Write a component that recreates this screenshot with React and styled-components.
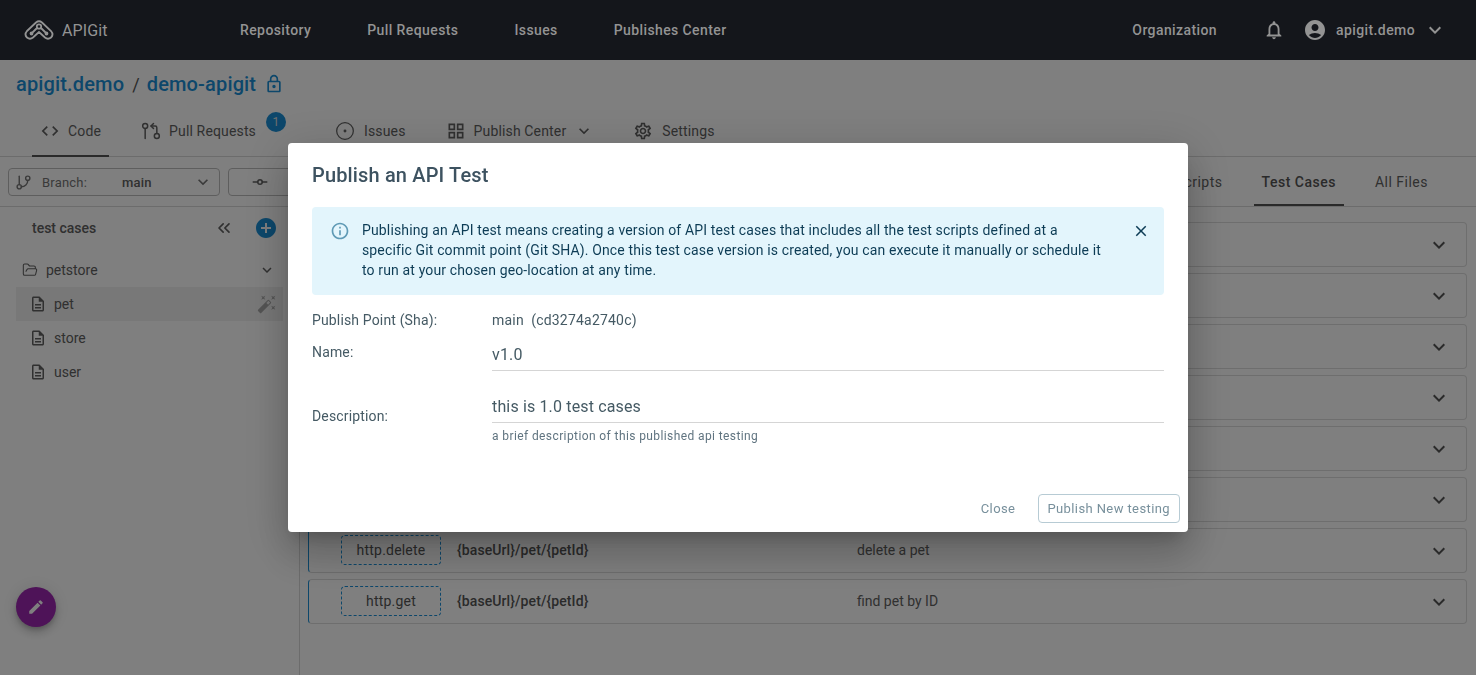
import React from 'react';
import styled, { createGlobalStyle } from 'styled-components';
import {
  MdAccountCircle, MdAddCircle, MdAutoFixHigh, MdClose, MdCode, MdEdit, MdExpandMore,
  MdInfoOutline, MdOutlineDescription, MdOutlineGridView,
  MdOutlineLock, MdOutlineNotifications, MdOutlineSettings,
} from 'react-icons/md';
import { ChevronsLeft, CircleDot, FolderOpen, GitBranch, GitCommitHorizontal, GitPullRequestArrow } from 'lucide-react';

const Global = createGlobalStyle`
  html, body { margin: 0; height: 100%; background: #fff; overflow: hidden; }
  body { font-family: Roboto, "Liberation Sans", sans-serif; color: #37474f; }
  * { box-sizing: border-box; }
`;

const Page = styled.div`
  height: 675px;
  display: flex;
  flex-direction: column;
`;

const Header = styled.header`
  height: 60px;
  flex: none;
  display: flex;
  align-items: center;
  background: #14161b;
  color: #939393;
  padding-left: 24px;
  position: relative;
  z-index: 20;
`;
const Brand = styled.div`
  width: 216px;
  display: flex;
  align-items: center;
  gap: 8px;
  font-size: 16px;
  letter-spacing: 0.1px;
`;
const NavLink = styled.span`
  font-size: 14px;
  font-weight: 500;
  letter-spacing: 0.4px;
  margin-right: ${p => p.$gap || 56}px;
`;
const HeaderRight = styled.div`
  margin-left: auto;
  display: flex;
  align-items: center;
  padding-right: 29px;
`;
const UserName = styled.span`
  font-size: 14px;
  font-weight: 500;
  letter-spacing: 0.4px;
  margin: 0 8px 0 9px;
`;

const Crumbs = styled.div`
  height: 48px;
  margin-bottom: 2px;
  flex: none;
  padding-left: 16px;
  display: flex;
  align-items: center;
  gap: 8px;
  font-size: 20px;
  font-weight: 500;
  letter-spacing: 0.15px;
  color: #1a8fd6;
`;
const Slash = styled.span`
  color: #555;
  font-weight: 400;
  font-size: 18px;
  margin-right: -1px;
`;

const TabBar = styled.div`
  height: 47px;
  flex: none;
  display: flex;
  padding-left: 32px;
  border-bottom: 1px solid #d9d9d9;
`;
const Tab = styled.div`
  display: flex;
  align-items: center;
  gap: ${p => p.$gap || 8}px;
  height: 47px;
  padding: 0 8px 4px;
  margin-right: ${p => p.$mr || 0}px;
  font-size: 14px;
  letter-spacing: 0.15px;
  color: #616161;
  position: relative;
  border-bottom: 2px solid ${p => (p.$active ? '#555' : 'transparent')};
`;
const Badge = styled.span`
  position: absolute;
  top: 2px;
  right: -22px;
  width: 20px;
  height: 20px;
  border-radius: 50%;
  background: #1a8fd6;
  color: #ddd;
  font-size: 12px;
  display: flex;
  align-items: center;
  justify-content: center;
`;

const Toolbar = styled.div`
  height: 50px;
  flex: none;
  display: flex;
  align-items: center;
  padding: 1px 0 0 8px;
  gap: 8px;
  border-bottom: 1px solid #d9d9d9;
`;
const BranchSelect = styled.div`
  width: 212px;
  height: 28px;
  display: flex;
  align-items: center;
  padding: 0 6px;
  border: 1px solid #bdbdbd;
  border-radius: 4px;
  font-size: 13px;
  letter-spacing: 0.2px;
  color: #757575;
`;
const BranchName = styled.b`
  margin: 0 auto 0 35px;
  font-weight: 500;
  color: #616161;
`;
const CommitButton = styled.div`
  width: 120px;
  height: 28px;
  display: flex;
  align-items: center;
  padding-left: 22px;
  border: 1px solid #bdbdbd;
  border-radius: 4px;
  color: #616161;
`;
const ViewTabs = styled.div`
  margin-left: auto;
  display: flex;
  align-self: stretch;
  padding-right: 40px;
`;
const ViewTab = styled.div`
  display: flex;
  align-items: center;
  padding: ${p => (p.$active ? '2px' : '0')} 8px 0;
  margin-left: 23px;
  font-size: 14px;
  letter-spacing: 0.5px;
  font-weight: ${p => (p.$active ? 500 : 400)};
  color: ${p => (p.$active ? '#555' : '#616161')};
  border-bottom: ${p => (p.$active ? '2px solid #555' : 'none')};
`;

const Body = styled.div`
  flex: 1;
  display: flex;
  min-height: 0;
`;
const Sidebar = styled.aside`
  width: 300px;
  flex: none;
  padding: 1px 16px 0;
  border-right: 1px solid #d9d9d9;
  color: #616161;
  font-size: 14px;
`;
const SideHead = styled.div`
  height: 40px;
  display: flex;
  align-items: center;
  padding: 0 5px 0 16px;
  font-weight: 500;
`;
const SideTitle = styled.span`
  margin-right: auto;
`;
const TreeFolder = styled.div`
  height: 35px;
  margin-top: 4px;
  display: flex;
  align-items: center;
  gap: 8px;
  padding: 0 7px 0 6px;
`;
const FolderName = styled.span`
  margin-right: auto;
`;
const TreeFile = styled.div`
  height: 34px;
  display: flex;
  align-items: center;
  gap: 7px;
  padding: 0 6px 0 13px;
  background: ${p => (p.$selected ? '#f0f0f0' : 'transparent')};
`;
const FileName = styled.span`
  margin-right: auto;
`;
const WandIcon = styled(MdAutoFixHigh)`
  color: #a8a8a8;
`;

const List = styled.main`
  flex: 1;
  padding: 15px 9px 0 8px;
  display: flex;
  flex-direction: column;
  gap: 6px;
`;
const Row = styled.div`
  height: 45px;
  flex: none;
  display: flex;
  align-items: center;
  padding: 0 0 1px 32px;
  border: 1px solid #dcdcdc;
  border-left: 1px solid #1a8fd6;
  border-radius: 4px;
  font-size: 14px;
  color: #555;
`;
const Method = styled.span`
  width: 100px;
  height: 30px;
  display: flex;
  align-items: center;
  justify-content: center;
  border: 1px dashed #1a8fd6;
  border-radius: 4px;
  letter-spacing: 0.2px;
`;
const RowPath = styled.span`
  width: 400px;
  margin-left: 16px;
  font-weight: 500;
  letter-spacing: 0.1px;
`;
const RowDesc = styled.span`
  color: #616161;
`;
const RowChevron = styled.span`
  margin: 1px 15px 0 auto;
  display: flex;
  color: #555;
`;

const Fab = styled.button`
  position: fixed;
  left: 16px;
  top: 587px;
  width: 40px;
  height: 40px;
  border: 0;
  border-radius: 50%;
  background: #9c27b0;
  color: #fff;
  display: flex;
  align-items: center;
  justify-content: center;
  box-shadow: 0 3px 5px -1px rgba(0,0,0,.2), 0 6px 10px rgba(0,0,0,.14), 0 1px 18px rgba(0,0,0,.12);
`;

const Backdrop = styled.div`
  position: fixed;
  inset: 0;
  background: rgba(0, 0, 0, 0.5);
  z-index: 10;
`;
const Modal = styled.div`
  position: fixed;
  left: 288px;
  top: 143px;
  width: 900px;
  height: 389px;
  z-index: 11;
  background: #fff;
  border-radius: 4px;
  display: flex;
  flex-direction: column;
  box-shadow: 0 11px 15px -7px rgba(0,0,0,.2), 0 24px 38px 3px rgba(0,0,0,.14), 0 9px 46px 8px rgba(0,0,0,.12);
`;
const ModalTitle = styled.h2`
  margin: 0;
  padding: 16px 24px 0;
  height: 64px;
  font-size: 20px;
  line-height: 32px;
  font-weight: 500;
  letter-spacing: 0.15px;
  color: #3d5260;
`;
const Alert = styled.div`
  margin: 0 24px;
  height: 88px;
  flex: none;
  display: flex;
  padding: 13px 14px 0 18px;
  background: #e3f5fc;
  border-radius: 4px;
  color: #0d3c55;
  font-size: 14px;
  line-height: 20px;
  letter-spacing: 0.14px;
`;
const AlertIcon = styled.span`
  flex: none;
  width: 32px;
  padding-top: 1px;
  color: #5f9ab5;
`;
const AlertText = styled.div`
  flex: 1;
`;
const AlertClose = styled.span`
  flex: none;
  margin-left: 24px;
  padding-top: 2px;
  display: flex;
  height: 20px;
`;
const Form = styled.div`
  padding: 0 24px;
  flex: 1;
`;
const Field = styled.div`
  display: grid;
  grid-template-columns: 180px 1fr;
  margin-top: ${p => p.$mt || 0}px;
  font-size: 14px;
`;
const Label = styled.label`
  padding-top: ${p => p.$top || 0}px;
  letter-spacing: 0.15px;
  color: #455a64;
`;
const Value = styled.span`
  color: #455a64;
  letter-spacing: 0.2px;
  white-space: pre;
`;
const TextInput = styled.input`
  display: block;
  width: 100%;
  height: 32px;
  border: 0;
  border-bottom: 1px solid #d5d5d5;
  outline: none;
  padding: 0;
  font: 400 16px Roboto, sans-serif;
  letter-spacing: 0.15px;
  color: #455a64;
`;
const Hint = styled.div`
  margin-top: 6px;
  font-size: 12px;
  letter-spacing: 0.4px;
  color: #607480;
`;
const Actions = styled.div`
  height: 38px;
  flex: none;
  display: flex;
  align-items: flex-start;
  justify-content: flex-end;
  padding-right: 8px;
  gap: 6px;
`;
const TextButton = styled.button`
  height: 29px;
  padding: ${p => (p.$outlined ? '0 9px 0 8px' : '0 17px')};
  background: #fff;
  border: ${p => (p.$outlined ? '1px solid #b7cbd4' : '0')};
  border-radius: 4px;
  font: 400 13px Roboto, sans-serif;
  letter-spacing: 0.4px;
  color: #78909c;
`;

const Logo = () => (
  <svg width="30" height="22" viewBox="0 0 30 22" fill="none" stroke="#939393" strokeWidth="1.8">
    <path d="M3 12 L12 3.5 Q15 1 18 3.5 L27 12 Q30 15.5 27 18.5 Q24 21 21 18.5 L15 13 L9 18.5 Q6 21 3 18.5 Q0 15.5 3 12 Z" />
    <path d="M8.5 13.5 L13 9 M21.5 13.5 L17 9" />
    <circle cx="15" cy="7.5" r="2.2" />
    <circle cx="7.5" cy="14.5" r="1" />
    <circle cx="22.5" cy="14.5" r="1" />
  </svg>
);

const rows = [
  {}, {}, {}, {}, {}, {},
  { method: 'http.delete', path: '{baseUrl}/pet/{petId}', desc: 'delete a pet' },
  { method: 'http.get', path: '{baseUrl}/pet/{petId}', desc: 'find pet by ID' },
];

const files = ['pet', 'store', 'user'];

const App = () => (
  <Page>
    <Global />
    <Header>
      <Brand><Logo /> APIGit</Brand>
      <NavLink>Repository</NavLink>
      <NavLink>Pull Requests</NavLink>
      <NavLink>Issues</NavLink>
      <NavLink>Publishes Center</NavLink>
      <HeaderRight>
        <NavLink $gap={46}>Organization</NavLink>
        <MdOutlineNotifications size={22} style={{ marginRight: 18 }} />
        <MdAccountCircle size={24} />
        <UserName>apigit.demo</UserName>
        <MdExpandMore size={24} />
      </HeaderRight>
    </Header>

    <Crumbs>
      apigit.demo <Slash>/</Slash> demo-apigit <MdOutlineLock size={20} />
    </Crumbs>

    <TabBar>
      <Tab $active $mr={24}><MdCode size={20} /> Code</Tab>
      <Tab $mr={63}>
        <GitPullRequestArrow size={20} strokeWidth={1.8} /> Pull Requests
        <Badge>1</Badge>
      </Tab>
      <Tab $mr={24} $gap={9}><CircleDot size={20} strokeWidth={1.5} /> Issues</Tab>
      <Tab $mr={23}><MdOutlineGridView size={20} /> Publish Center <MdExpandMore size={20} /></Tab>
      <Tab $gap={9}><MdOutlineSettings size={20} /> Settings</Tab>
    </TabBar>

    <Toolbar>
      <BranchSelect>
        <GitBranch size={17} style={{ marginRight: 10 }} />
        Branch:
        <BranchName>main</BranchName>
        <MdExpandMore size={20} />
      </BranchSelect>
      <CommitButton><GitCommitHorizontal size={18} /></CommitButton>
      <ViewTabs>
        <ViewTab>Scripts</ViewTab>
        <ViewTab $active>Test Cases</ViewTab>
        <ViewTab>All Files</ViewTab>
      </ViewTabs>
    </Toolbar>

    <Body>
      <Sidebar>
        <SideHead>
          <SideTitle>test cases</SideTitle>
          <ChevronsLeft size={20} style={{ marginRight: 20 }} />
          <MdAddCircle size={24} color="#1a8fd6" />
        </SideHead>
        <TreeFolder>
          <FolderOpen size={16} strokeWidth={1.6} />
          <FolderName>petstore</FolderName>
          <MdExpandMore size={18} />
        </TreeFolder>
        {files.map(name => (
          <TreeFile key={name} $selected={name === 'pet'}>
            <MdOutlineDescription size={18} />
            <FileName>{name}</FileName>
            {name === 'pet' && <WandIcon size={20} />}
          </TreeFile>
        ))}
      </Sidebar>
      <List>
        {rows.map((row, i) => (
          <Row key={i}>
            {row.method && <Method>{row.method}</Method>}
            {row.method && <RowPath>{row.path}</RowPath>}
            {row.method && <RowDesc>{row.desc}</RowDesc>}
            <RowChevron><MdExpandMore size={24} /></RowChevron>
          </Row>
        ))}
      </List>
    </Body>

    <Fab><MdEdit size={18} /></Fab>

    <Backdrop />
    <Modal>
      <ModalTitle>Publish an API Test</ModalTitle>
      <Alert>
        <AlertIcon><MdInfoOutline size={20} /></AlertIcon>
        <AlertText>
          Publishing an API test means creating a version of API test cases that includes all the test scripts defined at a<br />
          specific Git commit point (Git SHA). Once this test case version is created, you can execute it manually or schedule it<br />
          to run at your chosen geo-location at any time.
        </AlertText>
        <AlertClose><MdClose size={18} /></AlertClose>
      </Alert>
      <Form>
        <Field $mt={17}>
          <Label>Publish Point (Sha):</Label>
          <Value>main  (cd3274a2740c)</Value>
        </Field>
        <Field $mt={11}>
          <Label $top={5}>Name:</Label>
          <TextInput defaultValue="v1.0" />
        </Field>
        <Field $mt={20}>
          <Label $top={17}>Description:</Label>
          <div>
            <TextInput defaultValue="this is 1.0 test cases" />
            <Hint>a brief description of this published api testing</Hint>
          </div>
        </Field>
      </Form>
      <Actions>
        <TextButton>Close</TextButton>
        <TextButton $outlined>Publish New testing</TextButton>
      </Actions>
    </Modal>
  </Page>
);

export default App;
